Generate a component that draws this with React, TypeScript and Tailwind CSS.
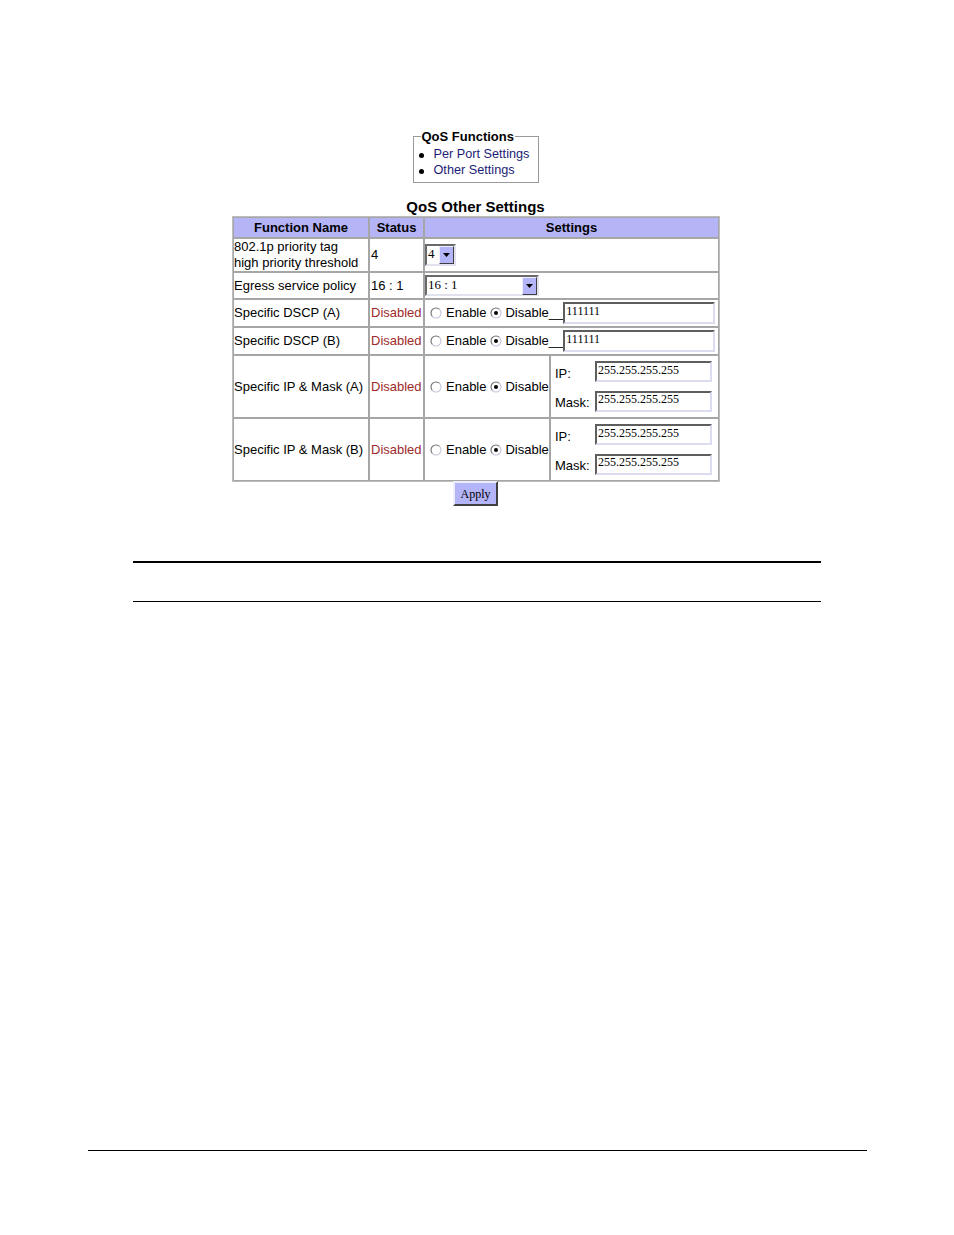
import React from "react";

const Radio = ({ checked }: { checked?: boolean }) => (
  <svg width="12" height="12" viewBox="0 0 12 12" className="shrink-0">
    <circle cx="6" cy="6" r="5" fill="white" />
    <path d="M2.46 9.54 A5 5 0 0 1 9.54 2.46" fill="none" stroke="#6e6e6e" strokeWidth="1.1" />
    <path d="M9.54 2.46 A5 5 0 0 1 2.46 9.54" fill="none" stroke="#c4c4dc" strokeWidth="1.1" />
    {checked && <circle cx="6" cy="6" r="2" fill="#000" />}
  </svg>
);

const Arrow = () => (
  <span className="w-[15px] h-[18px] shrink-0 bg-[#b4b4f8] border border-t-[#eeeeff] border-l-[#eeeeff] border-b-[#404040] border-r-[#404040] flex items-center justify-center">
    <svg width="7" height="4" viewBox="0 0 7 4">
      <path d="M0 0H7L3.5 4Z" fill="#000" />
    </svg>
  </span>
);

const SelectBox = ({ value, wide }: { value: string; wide?: boolean }) => (
  <div
    className={
      wide
        ? "w-[114px] h-[21px] flex items-center border-2 border-t-[#6a6a6a] border-l-[#6a6a6a] border-b-[#e2e2ee] border-r-[#e2e2ee] bg-white"
        : "w-[31px] h-[22px] flex items-center border-2 border-t-[#6a6a6a] border-l-[#6a6a6a] border-b-[#e2e2ee] border-r-[#e2e2ee] bg-white"
    }
  >
    <span className="flex-1 pl-[1px] font-['Liberation_Serif',serif] text-[13px] leading-none -mt-[3px] whitespace-nowrap">{value}</span>
    <Arrow />
  </div>
);

const TextBox = ({ value, wide }: { value: string; wide?: boolean }) => (
  <input
    readOnly
    value={value}
    className={
      wide
        ? "w-[152px] h-[22px] pl-[1px] pb-[3px] border-2 border-t-[#5e5e5e] border-l-[#5e5e5e] border-b-[#dcdcf0] border-r-[#dcdcf0] bg-white font-['Liberation_Serif',serif] text-[12px] text-black outline-none"
        : "w-[117px] h-[21px] pl-[1px] pb-[3px] border-2 border-t-[#5e5e5e] border-l-[#5e5e5e] border-b-[#dcdcf0] border-r-[#dcdcf0] bg-white font-['Liberation_Serif',serif] text-[12px] text-black outline-none"
    }
  />
);

const RadioPair = ({ tail }: { tail?: boolean }) => (
  <div className="flex items-center pl-[5px] whitespace-nowrap">
    <Radio />
    <span className="ml-[4px]">Enable</span>
    <span className="ml-[4px]">
      <Radio checked />
    </span>
    <span className="ml-[3px]">Disable{tail ? "__" : ""}</span>
  </div>
);

const cell = "border border-[#a6a6a6] flex items-center whitespace-nowrap";
const head = "border border-[#a6a6a6] bg-[#b4b4f6] flex items-center justify-center font-bold text-[13px]";

export default function App() {
  return (
    <div className="w-[954px] h-[1235px] bg-white text-black font-['Liberation_Sans',Arial,sans-serif] text-[13px] flex flex-col">
      <div className="w-[951px] pt-[129px] flex flex-col items-center">
        <fieldset className="w-[126px] border border-[#9a9a9a] pl-[7px] pr-[1px] pt-[3px] pb-[3px]">
          <legend className="px-[1px] text-[13px] font-bold leading-[15px]">QoS Functions</legend>
          <div className="flex items-center h-[16px] text-[#1c1c78] text-[12.7px] whitespace-nowrap">
            <span className="w-[5px] h-[5px] shrink-0 rounded-full bg-black -ml-[2px] mr-[10px]" />
            <span>Per Port Settings</span>
          </div>
          <div className="flex items-center h-[16px] text-[#1c1c78] text-[12.7px] whitespace-nowrap">
            <span className="w-[5px] h-[5px] shrink-0 rounded-full bg-black -ml-[2px] mr-[10px]" />
            <span>Other Settings</span>
          </div>
        </fieldset>

        <div className="mt-[15px] h-[17px] leading-[17px] text-[15px] font-bold">QoS Other Settings</div>

        <div className="mt-[1px] ml-[1px] w-[488px] border border-[#bdbdbd] grid grid-cols-[136px_55px_126px_169px] grid-rows-[21px_34px_27px_28px_28px_63px_63px]">
          <div className={head}>Function Name</div>
          <div className={head}>Status</div>
          <div className={head + " col-span-2"}>Settings</div>

          <div className={cell + " leading-[16px]"}>
            <div>
              802.1p priority tag
              <br />
              high priority threshold
            </div>
          </div>
          <div className={cell + " pl-[1px]"}>4</div>
          <div className={cell + " col-span-2"}>
            <SelectBox value="4" />
          </div>

          <div className={cell}>Egress service policy</div>
          <div className={cell + " pl-[1px]"}>16 : 1</div>
          <div className={cell + " col-span-2"}>
            <SelectBox value="16 : 1" wide />
          </div>

          <div className={cell}>Specific DSCP (A)</div>
          <div className={cell + " pl-[1px] text-[#a02a2a]"}>Disabled</div>
          <div className={cell + " col-span-2"}>
            <RadioPair tail />
            <TextBox value="111111" wide />
          </div>

          <div className={cell}>Specific DSCP (B)</div>
          <div className={cell + " pl-[1px] text-[#a02a2a]"}>Disabled</div>
          <div className={cell + " col-span-2"}>
            <RadioPair tail />
            <TextBox value="111111" wide />
          </div>

          {["A", "B"].map((k) => (
            <React.Fragment key={k}>
              <div className={cell}>Specific IP &amp; Mask ({k})</div>
              <div className={cell + " pl-[1px] text-[#a02a2a]"}>Disabled</div>
              <div className={cell}>
                <RadioPair />
              </div>
              <div className={cell + " pl-[4px]"}>
                <div className="flex flex-col gap-[7px]">
                  <div className="flex items-center">
                    <span className="w-[40px] pt-[3px]">IP:</span>
                    <TextBox value="255.255.255.255" />
                  </div>
                  <div className="flex items-center">
                    <span className="w-[40px] pt-[3px]">Mask:</span>
                    <TextBox value="255.255.255.255" />
                  </div>
                </div>
              </div>
            </React.Fragment>
          ))}
        </div>

        <button className="-mt-[1px] w-[45px] h-[25px] bg-[#b4b4f8] border-2 border-t-[#ececff] border-l-[#ececff] border-b-[#404040] border-r-[#404040] font-['Liberation_Serif',serif] text-[12px] leading-none text-black">
          Apply
        </button>
      </div>

      <div className="mt-[55px] ml-[133px] w-[688px] h-[2px] bg-black" />
      <div className="mt-[38px] ml-[133px] w-[688px] h-[1px] bg-black" />
      <div className="mt-[548px] ml-[88px] w-[779px] h-[1px] bg-black" />
    </div>
  );
}
